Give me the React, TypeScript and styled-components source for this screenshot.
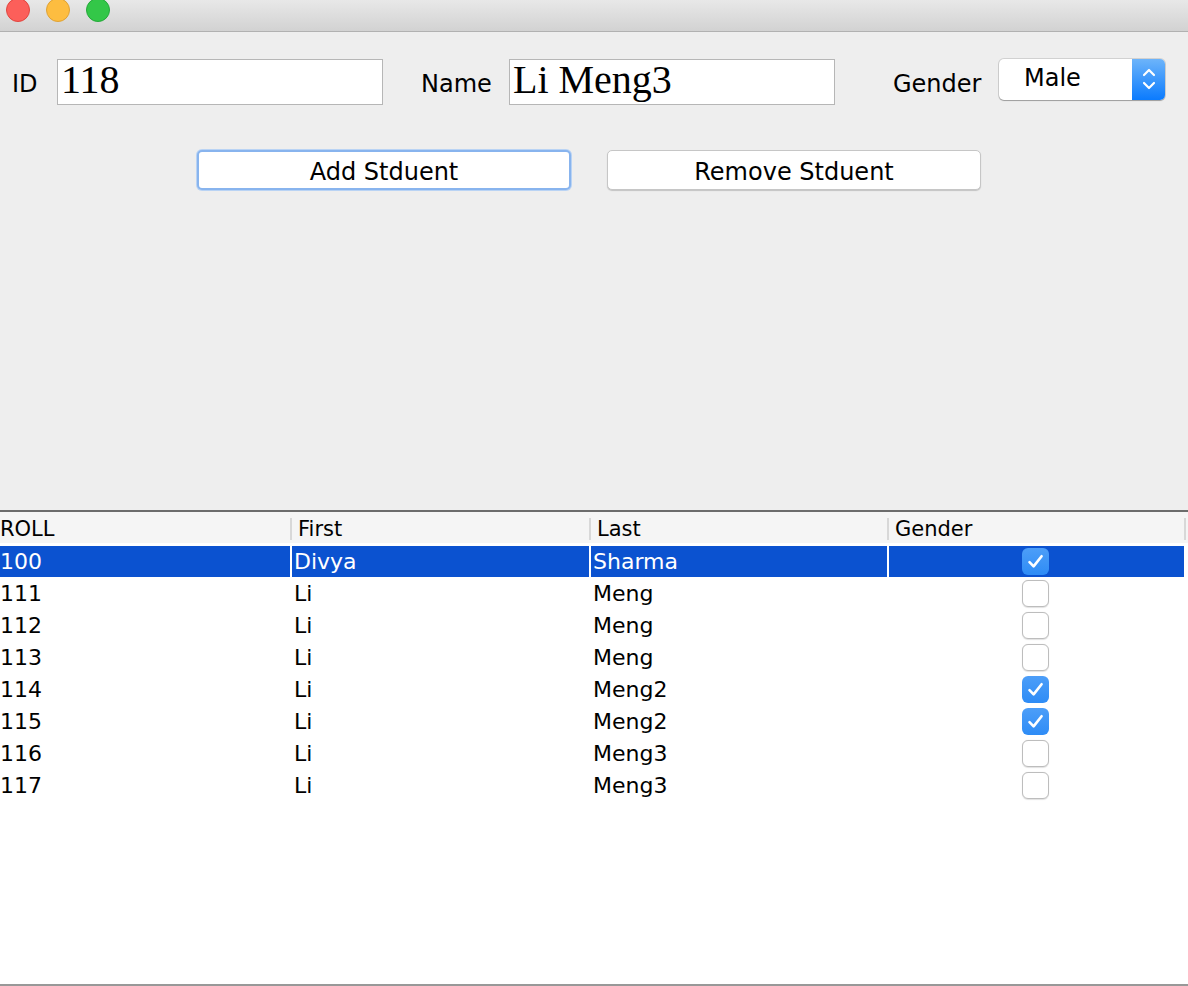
import styled, { createGlobalStyle } from 'styled-components';

type Student = { roll: number; first: string; last: string; male: boolean };

const STUDENTS: Student[] = [
  { roll: 100, first: 'Divya', last: 'Sharma', male: true },
  { roll: 111, first: 'Li', last: 'Meng', male: false },
  { roll: 112, first: 'Li', last: 'Meng', male: false },
  { roll: 113, first: 'Li', last: 'Meng', male: false },
  { roll: 114, first: 'Li', last: 'Meng2', male: true },
  { roll: 115, first: 'Li', last: 'Meng2', male: true },
  { roll: 116, first: 'Li', last: 'Meng3', male: false },
  { roll: 117, first: 'Li', last: 'Meng3', male: false },
];

const COLUMNS = '292px 299px 298px 297px';
const UI_FONT = `"DejaVu Sans", "Liberation Sans", sans-serif`;

const GlobalStyle = createGlobalStyle`
  html, body {
    margin: 0;
    padding: 0;
    background: #eeeeee;
  }
  body {
    font-family: ${UI_FONT};
    color: #000;
  }
`;

const CheckMark = () => (
  <svg width="27" height="27" viewBox="0 0 27 27">
    <path
      d="M7.5 14.2 L11.6 18.4 L19.6 8.2"
      fill="none"
      stroke="#fff"
      strokeWidth="2.6"
      strokeLinecap="round"
      strokeLinejoin="round"
    />
  </svg>
);

const Stepper = () => (
  <svg width="16" height="26" viewBox="0 0 16 26">
    <path d="M3 9 L8 4 L13 9" fill="none" stroke="#fff" strokeWidth="2.2" strokeLinecap="round" strokeLinejoin="round" />
    <path d="M3 17 L8 22 L13 17" fill="none" stroke="#fff" strokeWidth="2.2" strokeLinecap="round" strokeLinejoin="round" />
  </svg>
);

const App = () => {
  return (
    <Window>
      <GlobalStyle />
      <TitleBar>
        <Light $fill="#fc5f5a" $ring="#e0463f" />
        <Light $fill="#fdbd40" $ring="#dea236" />
        <Light $fill="#33c748" $ring="#25a93a" />
      </TitleBar>

      <FormPanel>
        <FieldRow>
          <Label $width={45}>ID</Label>
          <TextField defaultValue="118" />
          <Label $width={88} $gap={38}>Name</Label>
          <TextField defaultValue="Li Meng3" />
          <Label $width={106} $gap={58}>Gender</Label>
          <Combo>
            <ComboValue>Male</ComboValue>
            <ComboArrows>
              <Stepper />
            </ComboArrows>
          </Combo>
        </FieldRow>

        <ButtonRow>
          <PushButton $focused>Add Stduent</PushButton>
          <PushButton>Remove Stduent</PushButton>
        </ButtonRow>
      </FormPanel>

      <TableArea>
        <HeaderRow>
          <HeaderCell>ROLL</HeaderCell>
          <HeaderCell>First</HeaderCell>
          <HeaderCell>Last</HeaderCell>
          <HeaderCell>Gender</HeaderCell>
        </HeaderRow>
        <TableBody>
          {STUDENTS.map((s, i) => (
            <BodyRow key={s.roll}>
              <Cell $selected={i === 0}>{s.roll}</Cell>
              <Cell $selected={i === 0}>{s.first}</Cell>
              <Cell $selected={i === 0}>{s.last}</Cell>
              <CheckCell $selected={i === 0}>
                <CheckBox $checked={s.male}>{s.male && <CheckMark />}</CheckBox>
              </CheckCell>
            </BodyRow>
          ))}
        </TableBody>
      </TableArea>
    </Window>
  );
};

export default App;

const Window = styled.div`
  display: flex;
  flex-direction: column;
  width: 1188px;
  height: 986px;
  overflow: hidden;
  background: #eeeeee;
`;

const TitleBar = styled.div`
  flex: 0 0 31px;
  display: flex;
  align-items: flex-start;
  gap: 16px;
  padding-left: 6px;
  background: linear-gradient(#e8e8e8, #d2d2d2);
  border-bottom: 1px solid #b1b1b1;
  overflow: hidden;
`;

const Light = styled.span<{ $fill: string; $ring: string }>`
  width: 22px;
  height: 22px;
  margin-top: -2px;
  border-radius: 50%;
  background: ${(p) => p.$fill};
  border: 1px solid ${(p) => p.$ring};
`;

const FormPanel = styled.div`
  flex: 1;
  display: flex;
  flex-direction: column;
  padding: 27px 0 0 12px;
`;

const FieldRow = styled.div`
  display: flex;
  align-items: center;
  height: 46px;
`;

const Label = styled.label<{ $width: number; $gap?: number }>`
  width: ${(p) => p.$width}px;
  margin-left: ${(p) => p.$gap ?? 0}px;
  font-size: 24px;
  padding-top: 4px;
  flex-shrink: 0;
`;

const TextField = styled.input`
  box-sizing: border-box;
  width: 326px;
  height: 46px;
  margin: 0;
  padding: 0 0 5px 3px;
  border: 1px solid #b6b6b6;
  background: #fff;
  font-family: "Liberation Serif", "Times New Roman", serif;
  font-size: 40px;
  color: #000;
  outline: none;
`;

const Combo = styled.div`
  display: flex;
  width: 166px;
  height: 41px;
  margin-bottom: 6px;
  border-radius: 5px;
  background: #fff;
  box-shadow: 0 0 0 1px rgba(0, 0, 0, 0.12), 0 1px 1px rgba(0, 0, 0, 0.25);
  overflow: hidden;
`;

const ComboValue = styled.span`
  flex: 1;
  padding-left: 25px;
  font-size: 24px;
  line-height: 39px;
`;

const ComboArrows = styled.span`
  width: 33px;
  display: flex;
  align-items: center;
  justify-content: center;
  background: linear-gradient(#6db4fa, #0b7bfe);
`;

const ButtonRow = styled.div`
  display: flex;
  gap: 36px;
  padding-left: 185px;
  margin-top: 45px;
`;

const PushButton = styled.button<{ $focused?: boolean }>`
  box-sizing: border-box;
  width: 374px;
  height: 40px;
  padding: 3px 0 0;
  border-radius: 5px;
  background: #fff;
  font-family: ${UI_FONT};
  font-size: 24px;
  color: #000;
  border: ${(p) => (p.$focused ? '2px solid #88b4ee' : '1px solid #c6c6c6')};
  box-shadow: ${(p) => (p.$focused ? '0 0 0 1px #b9d3f4' : '0 1px 1px rgba(0, 0, 0, 0.18)')};
`;

const TableArea = styled.div`
  flex: 0 0 472px;
  display: flex;
  flex-direction: column;
  background: #fff;
  border-top: 2px solid #6c6c6c;
  border-bottom: 2px solid #989898;
`;

const HeaderRow = styled.div`
  display: grid;
  grid-template-columns: ${COLUMNS};
  height: 31px;
  padding: 6px 0 3px;
  box-sizing: border-box;
  background: #f5f5f5;
  margin-bottom: 3px;
`;

const HeaderCell = styled.div`
  border-right: 2px solid #d8d8d8;
  padding-left: 6px;
  font-size: 21px;
  line-height: 22px;
  white-space: nowrap;

  &:first-child {
    padding-left: 0;
  }
`;

const TableBody = styled.div`
  flex: 1;
  display: flex;
  flex-direction: column;
`;

const BodyRow = styled.div`
  display: grid;
  grid-template-columns: ${COLUMNS};
  height: 32px;
  padding-bottom: 1px;
  box-sizing: border-box;
`;

const Cell = styled.div<{ $selected?: boolean }>`
  border-right: 2px solid #fff;
  padding-left: 2px;
  font-size: 22px;
  line-height: 31px;
  white-space: nowrap;
  background: ${(p) => (p.$selected ? '#0b52d0' : 'transparent')};
  color: ${(p) => (p.$selected ? '#fff' : '#000')};

  &:first-child {
    padding-left: 0;
  }
`;

const CheckCell = styled(Cell)`
  display: flex;
  align-items: center;
  justify-content: center;
  padding-left: 0;
  padding-right: 3px;
`;

const CheckBox = styled.span<{ $checked: boolean }>`
  box-sizing: border-box;
  width: 27px;
  height: 27px;
  border-radius: 6px;
  display: flex;
  background: ${(p) => (p.$checked ? 'linear-gradient(#4d9ef8, #2e8cf6)' : '#fff')};
  border: ${(p) => (p.$checked ? 'none' : '1.5px solid #bdbdbd')};
  box-shadow: ${(p) => (p.$checked ? 'none' : '0 0.5px 1px rgba(0,0,0,0.12)')};
`;
